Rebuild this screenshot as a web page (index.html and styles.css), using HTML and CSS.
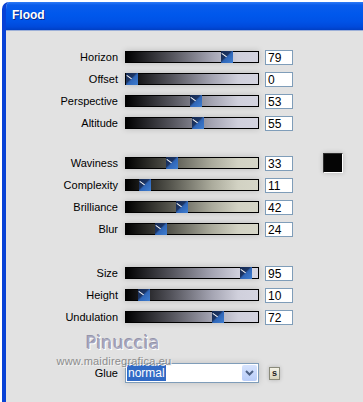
FILE: index.html
```html
<!DOCTYPE html>
<html lang="en">
<head>
    <meta charset="UTF-8">
    <title>Flood</title>
    <link rel="stylesheet" href="styles.css">
</head>
<body>
<div class="window">
    <div class="titlebar">Flood</div>
    <div class="panel">
        <div class="group">
            <div class="row">
                <div class="label">Horizon</div>
                <div class="track"><span class="thumb" style="--v:79"></span></div>
                <div class="value">79</div>
            </div>
            <div class="row">
                <div class="label">Offset</div>
                <div class="track"><span class="thumb" style="--v:0"></span></div>
                <div class="value">0</div>
            </div>
            <div class="row">
                <div class="label">Perspective</div>
                <div class="track"><span class="thumb" style="--v:53"></span></div>
                <div class="value">53</div>
            </div>
            <div class="row">
                <div class="label">Altitude</div>
                <div class="track"><span class="thumb" style="--v:55"></span></div>
                <div class="value">55</div>
            </div>
        </div>

        <div class="group beige">
            <div class="row">
                <div class="label">Waviness</div>
                <div class="track"><span class="thumb" style="--v:33"></span></div>
                <div class="value">33</div>
                <div class="swatch"></div>
            </div>
            <div class="row">
                <div class="label">Complexity</div>
                <div class="track"><span class="thumb" style="--v:11"></span></div>
                <div class="value">11</div>
            </div>
            <div class="row">
                <div class="label">Brilliance</div>
                <div class="track"><span class="thumb" style="--v:42"></span></div>
                <div class="value">42</div>
            </div>
            <div class="row">
                <div class="label">Blur</div>
                <div class="track"><span class="thumb" style="--v:24"></span></div>
                <div class="value">24</div>
            </div>
        </div>

        <div class="group">
            <div class="row">
                <div class="label">Size</div>
                <div class="track"><span class="thumb" style="--v:95"></span></div>
                <div class="value">95</div>
            </div>
            <div class="row">
                <div class="label">Height</div>
                <div class="track"><span class="thumb" style="--v:10"></span></div>
                <div class="value">10</div>
            </div>
            <div class="row">
                <div class="label">Undulation</div>
                <div class="track"><span class="thumb" style="--v:72"></span></div>
                <div class="value">72</div>
            </div>
        </div>

        <div class="row glue">
            <div class="label">Glue</div>
            <div class="select">
                <span class="selected">normal</span>
                <span class="drop">
                    <svg width="9" height="6" viewBox="0 0 9 6"><path d="M1 1 L4.5 4.5 L8 1" fill="none" stroke="#4d6185" stroke-width="2"/></svg>
                </span>
            </div>
            <div class="sbtn">s</div>
        </div>

        <div class="watermark">
            <div class="wm-name">Pinuccia</div>
            <div class="wm-url">www.maidiregrafica.eu</div>
        </div>
    </div>
</div>
</body>
</html>
```

FILE: styles.css
```css
body {
    margin: 0;
    background-color: #ffffff;
    font-family: "Liberation Sans", Arial, sans-serif;
    overflow: hidden;
}

.window {
    margin: 2px 0 0 2px;
    height: 400px;
    border-left: 4px solid #0842d6;
    border-top-left-radius: 7px;
    overflow: hidden;
    background-color: #e2e2e2;
}

.titlebar {
    height: 28px;
    padding-left: 6px;
    line-height: 27px;
    color: #ffffff;
    font-size: 12px;
    font-weight: bold;
    text-shadow: 1px 1px 0 #0a2a8a;
    background: linear-gradient(#2f7cf6 0, #0a5ceb 3px, #0058ec 12px, #0052e6 20px, #0049da 25px, #003fc4 28px);
}

.panel {
    position: relative;
    padding-top: 15px;
    height: 360px;
    border-top: 1px solid #9db0d8;
}

.group {
    margin-bottom: 18px;
}

.group + .group + .group {
    margin-bottom: 34px;
}

.beige {
    margin-bottom: 22px;
}

.row {
    display: flex;
    align-items: center;
    height: 22px;
}

.label {
    width: 112px;
    margin-right: 7px;
    text-align: right;
    font-size: 11px;
    color: #000000;
}

.track {
    position: relative;
    width: 132px;
    height: 10px;
    border: 1px solid #000000;
    background: linear-gradient(to right, #000000 0%, #55555d 35%, #a4a4b2 65%, #d0d0dc 85%, #d4d4e0 100%);
    box-shadow: 0 0 6px rgba(0, 0, 0, 0.18);
}

.beige .track {
    background: linear-gradient(to right, #000000 0%, #595951 35%, #abab9c 65%, #d2d2c3 85%, #d6d6c8 100%);
}

.thumb {
    position: absolute;
    top: -1px;
    left: calc(var(--v) * 1.2px);
    width: 12px;
    height: 12px;
    background: linear-gradient(135deg, #14284f 0, #1c3564 42%, #2f66b8 52%, #3f7ed0 100%);
}

.thumb:before {
    content: '';
    position: absolute;
    left: 1px;
    top: 2px;
    width: 6px;
    height: 1px;
    background-color: #ffffff;
    transform: rotate(35deg);
    transform-origin: left top;
}

.value {
    width: 24px;
    height: 13px;
    margin-left: 6px;
    padding-left: 2px;
    border: 1px solid #7f9db9;
    background-color: #ffffff;
    font-size: 12px;
    line-height: 14px;
    color: #000000;
}

.swatch {
    width: 18px;
    height: 18px;
    margin-left: 30px;
    border: 1px solid #ffffff;
    border-top-color: #303030;
    border-left-color: #303030;
    background-color: #050505;
    box-shadow: 0 0 5px rgba(0, 0, 0, 0.2);
}

.glue {
    height: 22px;
}

.select {
    display: flex;
    align-items: center;
    justify-content: space-between;
    width: 132px;
    height: 18px;
    border: 1px solid #7f9db9;
    background-color: #ffffff;
    box-shadow: 0 0 6px rgba(0, 0, 0, 0.15);
}

.selected {
    margin-left: 1px;
    padding: 0 1px;
    height: 16px;
    line-height: 16px;
    font-size: 12px;
    color: #ffffff;
    background-color: #316ac5;
}

.drop {
    display: flex;
    align-items: center;
    justify-content: center;
    width: 15px;
    height: 16px;
    margin-right: 1px;
    background: linear-gradient(#d6e3fd, #b9cdf8);
    border-radius: 2px;
}

.sbtn {
    width: 9px;
    height: 11px;
    margin-left: 10px;
    border: 1px solid #8a8a7a;
    background: linear-gradient(#f4f2e6, #d8d4bc);
    font-size: 9px;
    font-weight: bold;
    line-height: 10px;
    text-align: center;
    color: #222222;
    box-shadow: 0 0 4px rgba(0, 0, 0, 0.2);
}

.watermark {
    position: absolute;
    left: 43px;
    top: 302px;
    width: 130px;
    text-align: center;
    pointer-events: none;
}

.wm-name {
    margin-left: 18px;
    font-family: "DejaVu Sans", sans-serif;
    font-size: 17px;
    letter-spacing: 0.5px;
    color: #a6a6be;
    text-shadow: 1px 1px 0 #ffffff, -1px -1px 0 #9494aa;
}

.wm-url {
    margin-top: 2px;
    font-size: 11px;
    letter-spacing: 0.2px;
    color: #8c8c8c;
    text-shadow: 1px 1px 0 #f2f2f2;
}
```
